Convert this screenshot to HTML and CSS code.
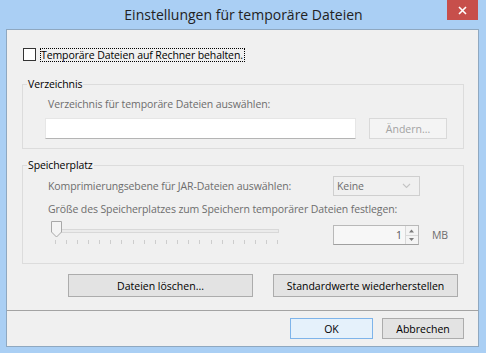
FILE: index.html
```html
<!DOCTYPE html>
<html lang="de">
<head>
<meta charset="utf-8">
<title>Einstellungen für temporäre Dateien</title>
<link rel="stylesheet" href="styles.css">
</head>
<body>
<div class="window">
  <div class="titlebar">
    <span class="title">Einstellungen für temporäre Dateien</span>
    <div class="close"><svg width="9" height="9" viewBox="0 0 9 9"><path d="M1 1L8 8M8 1L1 8" stroke="#fff" stroke-width="1.6"/></svg></div>
  </div>
  <div class="client">
    <div class="main">
      <div class="check-row">
        <span class="checkbox"></span>
        <span class="focus">Temporäre Dateien auf Rechner behalten.</span>
      </div>
      <fieldset class="group g1">
        <legend>Verzeichnis</legend>
        <div class="body1">
          <div class="hint">Verzeichnis für temporäre Dateien auswählen:</div>
          <div class="dir-row">
            <div class="textbox"></div>
            <button class="btn disabled change">Ändern...</button>
          </div>
        </div>
      </fieldset>
      <fieldset class="group g2">
        <legend>Speicherplatz</legend>
        <div class="body2">
          <div class="row r1">
            <span class="hint">Komprimierungsebene für JAR-Dateien auswählen:</span>
            <div class="combo"><span>Keine</span><svg width="9" height="6" viewBox="0 0 9 6"><path d="M1 1L4.5 4.5L8 1" fill="none" stroke="#c4c4c4" stroke-width="1.1"/></svg></div>
          </div>
          <div class="hint r2">Größe des Speicherplatzes zum Speichern temporärer Dateien festlegen:</div>
          <div class="row r3">
            <svg class="slider" width="232" height="27" viewBox="0 0 232 27">
              <rect x="5.5" y="9.5" width="223" height="3" fill="#ebebeb" stroke="#d8d8d8"/>
              <path d="M5.5 20v4M16.5 20v4M27.5 20v4M38.5 20v4M49.5 20v4M60.5 20v4M71.5 20v4M83.5 20v4M94.5 20v4M105.5 20v4M116.5 20v4M127.5 20v4M138.5 20v4M149.5 20v4M161.5 20v4M172.5 20v4M183.5 20v4M194.5 20v4M205.5 20v4M216.5 20v4M227.5 20v4" stroke="#cdcdcd"/>
              <path d="M1.5 1.5H11.5V12L6.5 17L1.5 12Z" fill="#f4f4f4" stroke="#a8a8a8"/>
            </svg>
            <div class="spinner">
              <span class="spin-value">1</span>
              <svg class="spin-arrows" width="13" height="18" viewBox="0 0 13 18">
                <rect x="0" y="0" width="13" height="18" fill="#f4f4f4"/>
                <path d="M0.5 0V18" stroke="#d9d9d9"/>
                <path d="M1 9.5H13" stroke="#d9d9d9"/>
                <path d="M4 6.5L6.5 3.5L9 6.5Z" fill="#7a7a7a"/>
                <path d="M4 12L6.5 15L9 12Z" fill="#7a7a7a"/>
              </svg>
            </div>
            <span class="unit">MB</span>
          </div>
        </div>
      </fieldset>
      <div class="actions">
        <button class="btn wide">Dateien löschen...</button>
        <button class="btn wide">Standardwerte wiederherstellen</button>
      </div>
    </div>
    <div class="footer">
      <button class="btn ok">OK</button>
      <button class="btn cancel">Abbrechen</button>
    </div>
  </div>
</div>
</body>
</html>
```
FILE: styles.css
```css
html, body {
  margin: 0;
  padding: 0;
}
body {
  font-family: "Open Sans", "Noto Sans", sans-serif;
  font-size: 10.5px;
  letter-spacing: -0.1px;
  color: #000;
  background: #aacff4;
}
.window {
  width: 486px;
  height: 353px;
  box-sizing: border-box;
  background: #aacff4;
  padding: 0 7px 6px 6px;
  display: flex;
  flex-direction: column;
}
.titlebar {
  height: 29px;
  flex: none;
  position: relative;
  display: flex;
  align-items: center;
  justify-content: center;
}
.title {
  font-size: 14px;
  letter-spacing: 0;
  color: #222;
  margin-left: 2px;
}
.close {
  position: absolute;
  top: 0;
  right: 1px;
  width: 31px;
  height: 20px;
  background: #c74f4b;
  display: flex;
  align-items: center;
  justify-content: center;
}
.client {
  flex: 1;
  border: 1px solid #8fa8c0;
  background: #f0f0f0;
  display: flex;
  flex-direction: column;
}
.main {
  height: 280px;
  flex: none;
  box-sizing: border-box;
  padding: 18px 14px 0 15px;
}
.check-row {
  display: flex;
  align-items: center;
  height: 13px;
  padding-left: 1px;
}
.checkbox {
  width: 13px;
  height: 13px;
  box-sizing: border-box;
  border: 1px solid #333;
  background: #fff;
}
.focus {
  margin-left: 4px;
  border: 1px dotted #000;
  padding: 0 1px 0 0;
  line-height: 12px;
}
.group {
  margin: 0;
  padding: 0;
  border: 1px solid #dcdcdc;
  min-width: 0;
}
.group legend {
  padding: 0 1px;
  margin-left: 4px;
  line-height: 14px;
}
.g1 {
  margin-top: 16px;
}
.g2 {
  margin-top: 9px;
}
.hint {
  color: #6d6d6d;
  line-height: 14px;
}
.body1 {
  padding: 6px 16px 9px 22px;
}
.body1 > .hint {
  margin-left: 3px;
}
.dir-row {
  margin-top: 7px;
  height: 21px;
  display: flex;
  justify-content: space-between;
}
.textbox {
  width: 311px;
  box-sizing: border-box;
  background: #fff;
  border: 1px solid #e6e6e6;
  border-bottom-color: #b4b4b4;
}
.btn {
  font: inherit;
  color: #000;
  padding: 0;
  margin: 0;
  box-sizing: border-box;
  border: 1px solid #acacac;
  background: #e3e3e3;
  text-align: center;
}
.btn.disabled {
  color: #a3a3a3;
  border-color: #d9d9d9;
  background: #f4f4f4;
}
.change {
  width: 78px;
  height: 21px;
}
.body2 {
  padding: 4px 16px 16px 22px;
}
.row {
  display: grid;
  grid-template-columns: 288px auto auto 1fr;
  align-items: center;
}
.r1 {
  height: 20px;
}
.r1 > .hint {
  margin-left: 3px;
}
.r2 {
  margin-top: 6px;
  margin-left: 3px;
}
.r3 {
  margin-top: 4px;
  height: 27px;
  align-items: start;
}
.combo {
  width: 87px;
  height: 20px;
  box-sizing: border-box;
  border: 1px solid #cfcfcf;
  background: #f0f0f0;
  color: #6d6d6d;
  display: flex;
  align-items: center;
  justify-content: space-between;
  padding: 0 8px 0 3px;
}
.slider {
  display: block;
  margin-left: 5px;
}
.spinner {
  margin-top: 5px;
  width: 86px;
  height: 20px;
  box-sizing: border-box;
  border: 1px solid #b9b9b9;
  border-bottom-color: #a0a0a0;
  background: #f7f7f7;
  display: flex;
}
.spin-value {
  flex: 1;
  text-align: right;
  padding-right: 3px;
  line-height: 18px;
  color: #555;
}
.spin-arrows {
  display: block;
}
.unit {
  margin-top: 5px;
  margin-left: 13px;
  line-height: 20px;
  color: #6d6d6d;
}
.actions {
  margin-top: 10px;
  padding-left: 46px;
  display: flex;
  gap: 20px;
}
.wide {
  width: 185px;
  height: 23px;
}
.footer {
  flex: 1;
  border-top: 1px solid #a3a3a3;
  padding: 7px 14px 0 0;
  display: flex;
  justify-content: flex-end;
  align-items: flex-start;
  gap: 9px;
}
.ok {
  width: 83px;
  height: 21px;
  border-color: #7eb4ea;
  background: #e5f1fb;
}
.cancel {
  width: 82px;
  height: 21px;
}
```
